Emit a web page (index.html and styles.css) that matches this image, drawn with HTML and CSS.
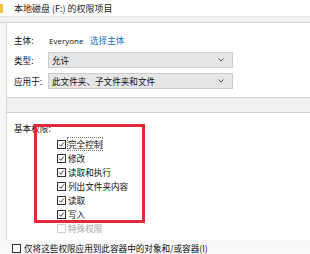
FILE: index.html
```html
<!DOCTYPE html>
<html lang="zh-CN">
<head>
<meta charset="utf-8">
<title>权限项目</title>
<link rel="stylesheet" href="styles.css">
</head>
<body>
<div class="window">
  <div class="titlebar">
    <span class="ticon"></span>
    <span class="title">本地磁盘 (F:) 的权限项目</span>
  </div>
  <div class="band"></div>
  <section class="panel top">
    <div class="row">
      <span class="label">主体:</span>
      <span class="value latin">Everyone</span>
      <span class="link">选择主体</span>
    </div>
    <div class="row">
      <span class="label">类型:</span>
      <div class="select"><span>允许</span><svg class="chev" viewBox="0 0 6 4" width="6" height="4"><polyline points="0.5,0.5 3,3 5.5,0.5" fill="none" stroke="#444" stroke-width="0.9"/></svg></div>
    </div>
    <div class="row">
      <span class="label">应用于:</span>
      <div class="select"><span>此文件夹、子文件夹和文件</span><svg class="chev" viewBox="0 0 6 4" width="6" height="4"><polyline points="0.5,0.5 3,3 5.5,0.5" fill="none" stroke="#444" stroke-width="0.9"/></svg></div>
    </div>
  </section>
  <div class="gap"></div>
  <section class="panel perms">
    <div class="perm-title">基本权限:</div>
    <ul class="perm-list">
      <li><span class="cb"><svg viewBox="0 0 8 8" width="8" height="8"><polyline points="1.3,4 3.2,6 6.8,1.6" fill="none" stroke="#222" stroke-width="1"/></svg></span><span class="focus">完全控制</span></li>
      <li><span class="cb"><svg viewBox="0 0 8 8" width="8" height="8"><polyline points="1.3,4 3.2,6 6.8,1.6" fill="none" stroke="#222" stroke-width="1"/></svg></span><span>修改</span></li>
      <li><span class="cb"><svg viewBox="0 0 8 8" width="8" height="8"><polyline points="1.3,4 3.2,6 6.8,1.6" fill="none" stroke="#222" stroke-width="1"/></svg></span><span>读取和执行</span></li>
      <li><span class="cb"><svg viewBox="0 0 8 8" width="8" height="8"><polyline points="1.3,4 3.2,6 6.8,1.6" fill="none" stroke="#222" stroke-width="1"/></svg></span><span>列出文件夹内容</span></li>
      <li><span class="cb"><svg viewBox="0 0 8 8" width="8" height="8"><polyline points="1.3,4 3.2,6 6.8,1.6" fill="none" stroke="#222" stroke-width="1"/></svg></span><span>读取</span></li>
      <li><span class="cb"><svg viewBox="0 0 8 8" width="8" height="8"><polyline points="1.3,4 3.2,6 6.8,1.6" fill="none" stroke="#222" stroke-width="1"/></svg></span><span>写入</span></li>
      <li class="disabled"><span class="cb"></span><span>特殊权限</span></li>
    </ul>
    <div class="redbox"></div>
  </section>
  <div class="footer">
    <span class="cb"></span><span>仅将这些权限应用到此容器中的对象和/或容器(I)</span>
  </div>
</div>
</body>
</html>
```

FILE: styles.css
```css
html, body {
  margin: 0;
  padding: 0;
}
body {
  width: 310px;
  height: 254px;
  overflow: hidden;
  background: #f6f6f6;
  font-family: "Noto Sans CJK SC", "Noto Sans", sans-serif;
  font-size: 8.6px;
  color: #111;
}
.window {
  display: flex;
  flex-direction: column;
  width: 310px;
}
.titlebar {
  height: 16px;
  background: #ffffff;
  display: flex;
  align-items: center;
}
.ticon {
  width: 3px;
  height: 9px;
  background: #f2c446;
  margin-right: 11px;
  margin-top: 1px;
}
.title {
  font-size: 9px;
  color: #222;
}
.band {
  height: 5px;
  background: #f1f1f1;
  border-top: 1px solid #e6e6e6;
  border-bottom: 1px solid #d8d8d8;
}
.panel {
  margin-left: 6px;
  background: #ffffff;
  border-left: 1px solid #d8d8d8;
}
.panel.top {
  padding: 9px 0 8px 7px;
  border-bottom: 1px solid #d2d2d2;
  display: flex;
  flex-direction: column;
  gap: 4px;
}
.row {
  display: flex;
  align-items: center;
  height: 16px;
}
.row + .row + .row {
  margin-top: 1px;
}
.label {
  width: 34px;
  flex: none;
  white-space: nowrap;
}
.value {
  margin-left: 1px;
  width: 41px;
}
.latin {
  font-family: "Open Sans", "Noto Sans", sans-serif;
  font-size: 8px;
}
.link {
  color: #1b6ec2;
}
.select {
  width: 185px;
  height: 16px;
  box-sizing: border-box;
  background: #e6e6e6;
  border: 1px solid #cdcdcd;
  display: flex;
  align-items: center;
  justify-content: space-between;
  padding: 0 8px 0 3px;
}
.chev {
  display: block;
}
.gap {
  height: 14px;
  background: #f1f1f1;
  margin-left: 6px;
  border-left: 1px solid #d8d8d8;
}
.panel.perms {
  position: relative;
  border-top: 1px solid #d2d2d2;
  padding: 9px 0 5px 7px;
  height: 113px;
}
.perm-title {
  height: 12px;
  line-height: 12px;
}
.perm-list {
  list-style: none;
  margin: 3px 0 0 0;
  padding: 0 0 0 43px;
}
.perm-list li {
  height: 14px;
  display: flex;
  align-items: center;
  gap: 2px;
}
.cb {
  width: 9px;
  height: 9px;
  border: 1px solid #333;
  box-sizing: border-box;
  background: #fff;
  display: flex;
  align-items: center;
  justify-content: center;
  flex: none;
}
.cb svg {
  display: block;
  width: 7px;
  height: 7px;
}
.focus {
  outline: 1px dotted #777;
  outline-offset: 0;
}
.disabled {
  color: #a8a8a8;
}
.disabled .cb {
  border-color: #d0d0d0;
}
.redbox {
  position: absolute;
  left: 27px;
  top: 11px;
  width: 111px;
  height: 99px;
  box-sizing: border-box;
  border: 3px solid #e02a35;
}
.footer {
  display: flex;
  align-items: center;
  gap: 3px;
  height: 14px;
  margin-top: 1px;
  padding-left: 12px;
  background: #f9f9f9;
}
```
